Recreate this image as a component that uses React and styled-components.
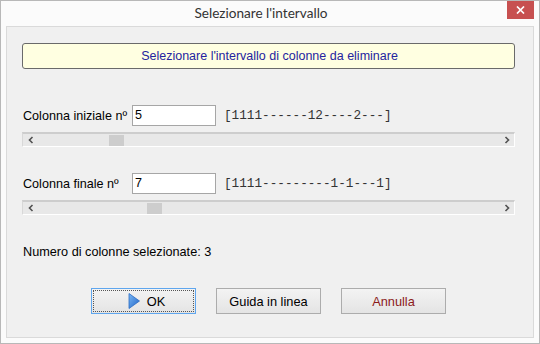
import React from "react";
import styled, { createGlobalStyle } from "styled-components";

const GlobalStyle = createGlobalStyle`
  html, body { margin: 0; padding: 0; background: #ffffff; }
  * { box-sizing: border-box; }
`;

const Window = styled.div`
  width: 540px;
  height: 344px;
  border: 1px solid #b8b8b8;
  background: #fbfbfb;
  display: flex;
  flex-direction: column;
  font-family: "Liberation Sans", Arial, sans-serif;
`;

const TitleBar = styled.div`
  position: relative;
  height: 25px;
  flex: none;
  display: flex;
  align-items: center;
  justify-content: center;
  padding-right: 18px;
`;

const Title = styled.div`
  font-family: Lato, "Open Sans", sans-serif;
  font-size: 13.6px;
  color: #333333;
  margin-top: -2px;
`;

const CloseButton = styled.div`
  position: absolute;
  top: 0;
  right: 5px;
  width: 27px;
  height: 18px;
  background: #c75050;
  color: #ffffff;
  display: flex;
  align-items: center;
  justify-content: center;
`;

const Client = styled.div`
  flex: 1;
  margin: 0 5px 5px 5px;
  border: 1px solid #dadada;
  background: #f0f0f0;
  padding: 16px 18px 0 15px;
  display: flex;
  flex-direction: column;
`;

const Banner = styled.div`
  height: 26px;
  border: 1px solid #6a6a6a;
  border-radius: 3px;
  background: #ffffe1;
  color: #24249f;
  font-size: 12.5px;
  display: flex;
  align-items: center;
  justify-content: center;
  padding-left: 2px;
`;

const FieldRow = styled.div`
  display: flex;
  align-items: center;
  margin-top: ${(p) => p.$top}px;
  padding-left: 1px;
`;

const Label = styled.div`
  width: 109px;
  font-size: 12.6px;
  color: #000000;
`;

const Input = styled.div`
  width: 84px;
  height: 21px;
  background: #ffffff;
  border: 1px solid #a6a6a6;
  font-size: 12.6px;
  color: #000;
  padding: 2px 2px 0;
  line-height: 15px;
`;

const Pattern = styled.div`
  margin-left: 8px;
  font-family: "Liberation Mono", "Courier New", monospace;
  font-size: 12.7px;
  color: #333333;
`;

const ScrollBar = styled.div`
  margin-top: ${(p) => p.$top}px;
  height: 15px;
  display: flex;
  background: #e8e8e8;
  border-top: 2px solid #cdcdcd;
  border-bottom: 1px solid #ffffff;
  border-right: 1px solid #ffffff;
  border-left: 1px solid #d8d8d8;
`;

const Arrow = styled.div`
  width: 15px;
  flex: none;
  display: flex;
  align-items: center;
  justify-content: center;
`;

const Track = styled.div`
  flex: 1;
  position: relative;
`;

const Thumb = styled.div`
  position: absolute;
  top: 1px;
  width: 15px;
  height: 11px;
  background: #cdcdcd;
`;

const Summary = styled.div`
  margin-top: 30px;
  padding-left: 1px;
  font-size: 12.7px;
  color: #000;
`;

const ButtonRow = styled.div`
  margin-top: 29px;
  display: flex;
  justify-content: center;
  gap: 20px;
`;

const Button = styled.div`
  width: 105px;
  height: 26px;
  border: 1px solid ${(p) => (p.$default ? "#5fa6ee" : "#acacac")};
  background: linear-gradient(#f3f3f3, #e4e4e4);
  display: flex;
  align-items: center;
  justify-content: center;
  gap: 7px;
  font-size: 12.8px;
  color: ${(p) => p.$color || "#000"};
  position: relative;
  padding: ${(p) => (p.$default ? "0 0 0 6px" : "0")};
`;

const Focus = styled.div`
  position: absolute;
  inset: 1px;
  border: 1px dotted #555;
  pointer-events: none;
`;

const Chevron = ({ dir }) => (
  <svg width="6" height="8" viewBox="0 0 6 8">
    <path
      d={dir === "left" ? "M4.5 1 L1.5 4 L4.5 7" : "M1.5 1 L4.5 4 L1.5 7"}
      fill="none"
      stroke="#505050"
      strokeWidth="1.6"
    />
  </svg>
);

const PlayIcon = () => (
  <svg width="12" height="16" viewBox="0 0 12 16">
    <defs>
      <linearGradient id="pg" x1="0" y1="0" x2="1" y2="1">
        <stop offset="0" stopColor="#7ab8f5" />
        <stop offset="1" stopColor="#1f63c6" />
      </linearGradient>
    </defs>
    <path d="M1 0.5 L11.5 8 L1 15.5 Z" fill="url(#pg)" stroke="#2b6cc4" strokeWidth="0.8" />
  </svg>
);

const Scroll = ({ value, top }) => (
  <ScrollBar $top={top}>
    <Arrow>
      <Chevron dir="left" />
    </Arrow>
    <Track>
      <Thumb style={{ left: 71 + (value - 5) * 19 }} />
    </Track>
    <Arrow>
      <Chevron dir="right" />
    </Arrow>
  </ScrollBar>
);

export default function App() {
  return (
    <>
      <GlobalStyle />
      <Window>
        <TitleBar>
          <Title>Selezionare l'intervallo</Title>
          <CloseButton>
            <svg width="9" height="8" viewBox="0 0 9 8">
              <path d="M1 0.5 L8 7.5 M8 0.5 L1 7.5" stroke="#fff" strokeWidth="1.7" />
            </svg>
          </CloseButton>
        </TitleBar>
        <Client>
          <Banner>Selezionare l'intervallo di colonne da eliminare</Banner>
          <FieldRow $top={36}>
            <Label>Colonna iniziale nº</Label>
            <Input>5</Input>
            <Pattern>[1111------12----2---]</Pattern>
          </FieldRow>
          <Scroll value={5} top={6} />
          <FieldRow $top={26}>
            <Label>Colonna finale nº</Label>
            <Input>7</Input>
            <Pattern>[1111---------1-1---1]</Pattern>
          </FieldRow>
          <Scroll value={7} top={6} />
          <Summary>Numero di colonne selezionate: 3</Summary>
          <ButtonRow>
            <Button $default>
              <Focus />
              <PlayIcon />
              <span>OK</span>
            </Button>
            <Button>Guida in linea</Button>
            <Button $color="#8b1a1a">Annulla</Button>
          </ButtonRow>
        </Client>
      </Window>
    </>
  );
}
